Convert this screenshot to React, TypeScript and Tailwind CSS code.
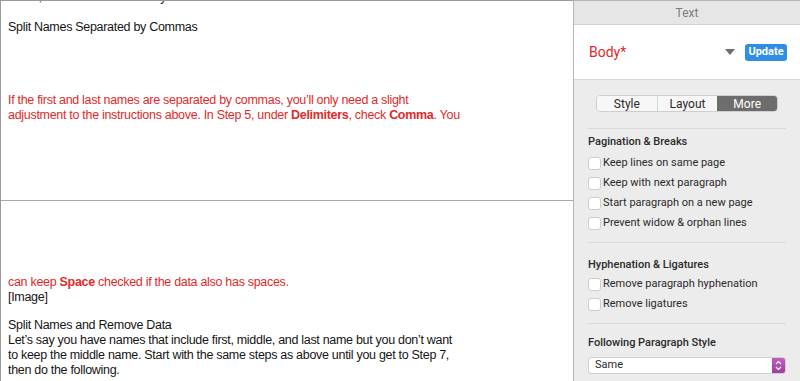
import React from 'react';

const docFont = { fontFamily: '"Liberation Sans", Arial, sans-serif' };

const Check: React.FC<{ label: string }> = ({ label }) => (
  <div className="flex items-center h-[20px]">
    <span className="w-[13px] h-[13px] rounded-[3px] bg-white border border-[#cdcdcd] shrink-0" />
    <span className="ml-[2px] text-[11px] text-[#2a2a2a]">{label}</span>
  </div>
);

const App: React.FC = () => {
  return (
    <div className="w-[800px] h-[381px] flex overflow-hidden bg-white">
      {/* Document */}
      <div
        className="w-[573px] h-full flex flex-col border-l border-t border-[#9a9a9a] bg-white text-[12.5px] tracking-[-0.3px] leading-[15px] text-[#151515] overflow-hidden"
        style={docFont}
      >
        <div className="h-[200px] px-[7px] border-b border-[#a8a8a8] shrink-0">
          <p className="mt-[-11px] whitespace-nowrap">Smith, each will work correctly.</p>
          <p className="mt-[15px] whitespace-nowrap">Split Names Separated by Commas</p>
          <p className="mt-[58px] text-[#e02a2a] whitespace-nowrap">
            If the first and last names are separated by commas, you’ll only need a slight
            <br />
            adjustment to the instructions above. In Step 5, under <b>Delimiters</b>, check <b>Comma</b>. You
          </p>
        </div>
        <div className="px-[7px] flex-1">
          <p className="mt-[74px] text-[#e02a2a] whitespace-nowrap">
            can keep <b>Space</b> checked if the data also has spaces.
          </p>
          <p className="whitespace-nowrap">[Image]</p>
          <p className="mt-[13px] whitespace-nowrap">Split Names and Remove Data</p>
          <p className="whitespace-nowrap">
            Let’s say you have names that include first, middle, and last name but you don’t want
            <br />
            to keep the middle name. Start with the same steps as above until you get to Step 7,
            <br />
            then do the following.
          </p>
        </div>
      </div>

      {/* Inspector */}
      <div
        className="flex-1 h-full flex flex-col bg-[#ececec] border-l border-t border-[#b5b5b5]"
        style={{ fontFamily: 'Roboto, "Noto Sans", sans-serif' }}
      >
        <div className="h-[24px] shrink-0 flex items-center justify-center bg-[#e6e6e6] border-b border-[#d2d2d2] text-[12px] text-[#7b7b7b]">
          Text
        </div>
        <div className="h-[55px] shrink-0 bg-white border-b border-[#d8d8d8] flex items-center pl-[15px] pr-[13px]">
          <span className="text-[14px] text-[#e0282a] flex-1">Body*</span>
          <svg width="10" height="8" viewBox="0 0 10 8" className="mr-[10px]">
            <path d="M0 1 L10 1 L5 7 Z" fill="#6e6e6e" />
          </svg>
          <span className="h-[17px] w-[42px] rounded-[3px] bg-[#2f8ee3] text-white text-[11px] font-bold flex items-center justify-center">
            Update
          </span>
        </div>
        <div className="flex justify-center pt-[15px]">
          <div className="flex h-[17px] w-[182px] rounded-[4px] overflow-hidden border border-[#cfcfcf] text-[12px]">
            <span className="flex-1 flex items-center justify-center bg-[#f7f7f7] text-[#2a2a2a] border-r border-[#d6d6d6]">Style</span>
            <span className="flex-1 flex items-center justify-center bg-[#f7f7f7] text-[#2a2a2a]">Layout</span>
            <span className="flex-1 flex items-center justify-center bg-[#6d6d6d] text-white">More</span>
          </div>
        </div>
        <div className="mx-[14px] mt-[16px] border-t border-[#d9d9d9]" />
        <div className="px-[14px] pt-[6px]">
          <div className="text-[11px] font-medium text-[#2a2a2a] h-[15px] flex items-center">Pagination &amp; Breaks</div>
          <div className="mt-[3px]">
            <Check label="Keep lines on same page" />
            <Check label="Keep with next paragraph" />
            <Check label="Start paragraph on a new page" />
            <Check label="Prevent widow & orphan lines" />
          </div>
        </div>
        <div className="mx-[14px] mt-[9px] border-t border-[#d9d9d9]" />
        <div className="px-[14px] pt-[15px]">
          <div className="text-[11px] font-medium text-[#2a2a2a] h-[15px] flex items-center">Hyphenation &amp; Ligatures</div>
          <div className="mt-[1px]">
            <Check label="Remove paragraph hyphenation" />
            <Check label="Remove ligatures" />
          </div>
        </div>
        <div className="mx-[14px] mt-[9px] border-t border-[#d9d9d9]" />
        <div className="px-[14px] pt-[12px]">
          <div className="text-[11px] font-medium text-[#2a2a2a] h-[15px] flex items-center">Following Paragraph Style</div>
          <div className="mt-[6px] h-[17px] flex items-center bg-white rounded-[3px] border border-[#d0d0d0] overflow-hidden">
            <span className="flex-1 pl-[6px] text-[11px] text-[#2a2a2a]">Same</span>
            <span className="w-[13px] h-full flex items-center justify-center bg-gradient-to-b from-[#c35ac3] to-[#a03fa0]">
              <svg width="7" height="11" viewBox="0 0 7 11">
                <path d="M1 4 L3.5 1.5 L6 4 M1 7 L3.5 9.5 L6 7" fill="none" stroke="white" strokeWidth="1.2" />
              </svg>
            </span>
          </div>
        </div>
      </div>
    </div>
  );
};

export default App;
